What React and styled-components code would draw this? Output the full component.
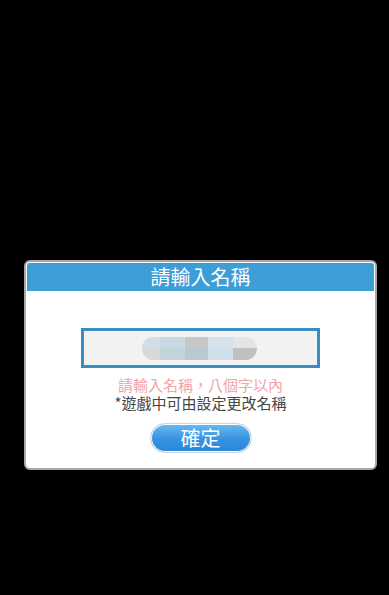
import React from 'react';
import styled, { createGlobalStyle } from 'styled-components';

const GlobalStyle = createGlobalStyle`
  html, body {
    margin: 0;
    padding: 0;
    background: #000;
  }
  body {
    font-family: "Noto Sans CJK TC", "Noto Sans", sans-serif;
  }
`;

const Screen = styled.div`
  width: 389px;
  height: 595px;
  background: #000;
  padding: 260px 0 0 24px;
  box-sizing: border-box;
`;

const Dialog = styled.div`
  width: 353px;
  box-sizing: border-box;
  background: #fff;
  border: 2px solid #a8a8a8;
  border-radius: 6px;
  padding: 1px;
  display: flex;
  flex-direction: column;
`;

const Header = styled.div`
  height: 28px;
  background: #3c9dd7;
  border-radius: 3px 3px 0 0;
  color: #fff;
  font-size: 20px;
  line-height: 28px;
  text-align: center;
`;

const Body = styled.div`
  display: flex;
  flex-direction: column;
  align-items: center;
  padding: 37px 0 14px;
`;

const NameField = styled.div`
  width: 239px;
  height: 40px;
  box-sizing: border-box;
  border: 3px solid #3a8dc2;
  background: #f2f2f2;
  display: flex;
  align-items: center;
  padding-left: 58px;
`;

const Blur = styled.div`
  width: 115px;
  height: 23px;
  border-radius: 12px;
  overflow: hidden;
  display: grid;
  grid-template-columns: 18px 25px 23px 25px 24px;
  grid-template-rows: 11px 12px;
`;

const Cell = styled.div`
  background: ${p => p.c};
`;

const Hint = styled.div`
  margin-top: 8px;
  font-size: 15px;
  line-height: 18px;
  color: ${p => (p.warn ? '#f3a2a9' : '#454545')};
  text-align: center;
`;

const ConfirmButton = styled.button`
  margin-top: 11px;
  width: 102px;
  height: 30px;
  box-sizing: border-box;
  border: 1px solid #c9d6e0;
  border-radius: 15px;
  background: linear-gradient(#6cbaf0, #3592e2 55%, #2d86d6);
  box-shadow: 0 0 0 1px #fff inset;
  color: #fff;
  font-family: inherit;
  font-size: 20px;
  line-height: 28px;
  padding: 0;
`;

const blurCells = [
  '#cfdde6', '#c9d9e3', '#c7c7c7', '#d3e2ec', '#e4e4e4',
  '#d8d8d8', '#c4d4dc', '#b9c8d1', '#d0e0ea', '#c0c0c0',
];

export default function App() {
  return (
    <>
      <GlobalStyle />
      <Screen>
        <Dialog>
          <Header>請輸入名稱</Header>
          <Body>
            <NameField>
              <Blur>
                {blurCells.map((c, i) => (
                  <Cell key={i} c={c} />
                ))}
              </Blur>
            </NameField>
            <Hint warn>請輸入名稱，八個字以內</Hint>
            <Hint style={{ marginTop: 0 }}>*遊戲中可由設定更改名稱</Hint>
            <ConfirmButton>確定</ConfirmButton>
          </Body>
        </Dialog>
      </Screen>
    </>
  );
}
